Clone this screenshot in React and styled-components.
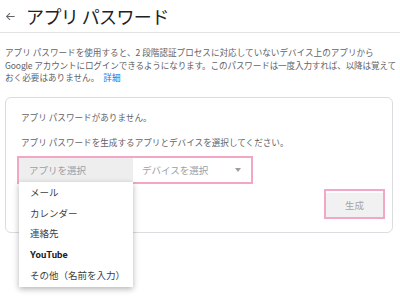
import React from "react";
import styled, { createGlobalStyle } from "styled-components";

const Global = createGlobalStyle`
  html, body { margin: 0; padding: 0; background: #fff; }
  body { font-family: "Noto Sans CJK JP", "Noto Sans", Roboto, sans-serif; width: 400px; overflow: hidden; }
`;

const Page = styled.div`
  width: 400px;
  height: 305px;
  display: flex;
  flex-direction: column;
`;

const Header = styled.div`
  height: 32px;
  display: flex;
  align-items: center;
  gap: 10px;
  padding-left: 5px;
  border-bottom: 1px solid #e3e3e3;
`;

const Title = styled.h1`
  margin: 0;
  font-size: 18px;
  font-weight: 400;
  color: #202124;
  letter-spacing: -0.6px;
  line-height: 1;
`;

const Intro = styled.div`
  margin: 13px 0 0;
  padding: 0 5px;
  font-size: 8.6px;
  line-height: 12.5px;
  color: #5f6368;
  display: flex;
  flex-direction: column;
`;

const Line = styled.span`
  white-space: nowrap;
  letter-spacing: ${(p) => p.$ls || 0}px;
`;

const Link = styled.a`
  color: #1a73e8;
  text-decoration: none;
  margin-left: 4px;
`;

const Card = styled.div`
  margin: 13px 7px 0 5px;
  border: 1px solid #dadce0;
  border-radius: 6px;
  padding: 13px 7px 13px 11px;
  display: flex;
  flex-direction: column;
`;

const Note = styled.div`
  font-size: 8.6px;
  line-height: 12px;
  color: #5f6368;
  margin-left: 4px;
  margin-bottom: ${(p) => p.$mb || 0}px;
`;

const SelectRow = styled.div`
  position: relative;
  display: flex;
  width: 232px;
  height: 24px;
  border: 2px solid #f2a7c6;
`;

const Select = styled.div`
  width: ${(p) => p.$w}px;
  display: flex;
  align-items: center;
  justify-content: space-between;
  padding: 0 10px 0 ${(p) => p.$pl}px;
  box-sizing: border-box;
  background: ${(p) => (p.$active ? "#eeeeee" : "#fff")};
  font-size: 9.5px;
  color: #9aa0a6;
`;

const Caret = styled.span`
  width: 0;
  height: 0;
  border-left: 3.5px solid transparent;
  border-right: 3.5px solid transparent;
  border-top: 4px solid #9e9e9e;
`;

const Menu = styled.ul`
  position: absolute;
  left: 0;
  top: 24px;
  width: 114px;
  margin: 0;
  padding: 0 0 2px;
  list-style: none;
  background: #fff;
  box-shadow: 0 2px 6px rgba(0, 0, 0, 0.3);
  z-index: 2;
`;

const Item = styled.li`
  height: 20.8px;
  display: flex;
  align-items: center;
  padding-left: 11px;
  font-size: 9.5px;
  color: ${(p) => (p.$strong ? "#202124" : "#3c4043")};
  font-weight: ${(p) => (p.$strong ? 700 : 400)};
  font-family: ${(p) => (p.$strong ? "Roboto, \"Noto Sans\", sans-serif" : "inherit")};
`;

const Actions = styled.div`
  display: flex;
  justify-content: flex-end;
  margin-top: 5px;
`;

const ButtonFrame = styled.div`
  border: 2px solid #f2a7c6;
  width: 57px;
  height: 26px;
  display: flex;
  align-items: flex-end;
`;

const Button = styled.button`
  width: 57px;
  height: 24px;
  border: none;
  background: #f1f1f1;
  color: #a6a6a6;
  font-family: inherit;
  font-size: 9.5px;
  padding: 0;
`;

function BackArrow() {
  return (
    <svg width="11" height="11" viewBox="0 0 24 24">
      <path d="M21 12H4M11 4.5L3.5 12l7.5 7.5" fill="none" stroke="#5f6368" strokeWidth="2.2" />
    </svg>
  );
}

export default function App() {
  return (
    <Page>
      <Global />
      <Header>
        <BackArrow />
        <Title>アプリ パスワード</Title>
      </Header>
      <Intro>
        <Line>アプリ パスワードを使用すると、2 段階認証プロセスに対応していないデバイス上のアプリから</Line>
        <Line $ls={-0.15}>Google アカウントにログインできるようになります。このパスワードは一度入力すれば、以降は覚えて</Line>
        <Line>
          おく必要はありません。<Link href="#">詳細</Link>
        </Line>
      </Intro>
      <Card>
        <Note $mb={13}>アプリ パスワードがありません。</Note>
        <Note $mb={8}>アプリ パスワードを生成するアプリとデバイスを選択してください。</Note>
        <SelectRow>
          <Select $w={114} $pl={10} $active>アプリを選択</Select>
          <Select $w={118} $pl={9}>
            デバイスを選択
            <Caret />
          </Select>
          <Menu>
            <Item>メール</Item>
            <Item>カレンダー</Item>
            <Item>連絡先</Item>
            <Item $strong>YouTube</Item>
            <Item>その他（名前を入力）</Item>
          </Menu>
        </SelectRow>
        <Actions>
          <ButtonFrame>
            <Button>生成</Button>
          </ButtonFrame>
        </Actions>
      </Card>
    </Page>
  );
}
